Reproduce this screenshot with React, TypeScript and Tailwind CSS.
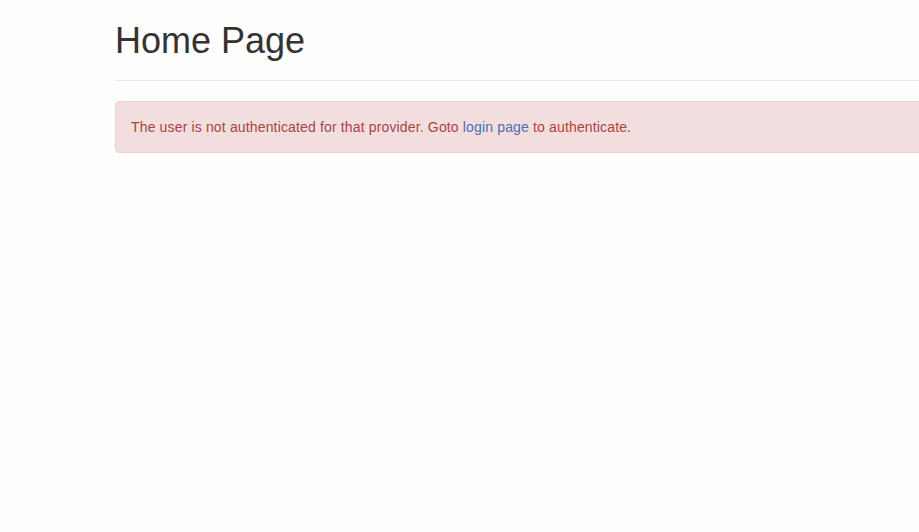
export default function App() {
  return (
    <div className="w-[919px] h-[532px] overflow-hidden bg-[#fefefd] text-[#333] text-[14px] leading-[20px]" style={{ fontFamily: '"Liberation Sans", Arial, sans-serif' }}>
      <div className="ml-[115px] w-[1170px] pt-[1px]">
        <div className="mt-[20px] pb-[9px] border-b border-[#e7e7e7]">
          <h1 className="text-[36px] leading-[39.6px] font-normal text-[#333] mb-[10px]">Home Page</h1>
        </div>
        <div className="mt-[20px] p-[15px] border border-[#ebccd1] bg-[#f2dede] text-[#a94442] rounded-[4px] tracking-[0.15px]">
          The user is not authenticated for that provider. Goto{" "}
          <a href="#" className="text-[#4b6fb6]">login page</a> to authenticate.
        </div>
      </div>
    </div>
  );
}
